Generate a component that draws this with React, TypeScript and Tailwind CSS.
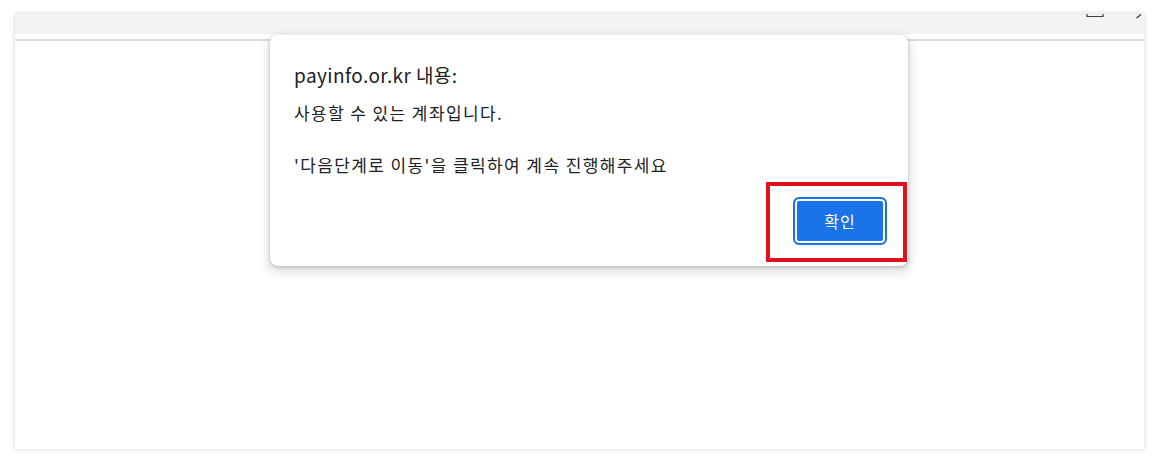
import React from 'react'

const KR = '"Noto Sans CJK KR", "Noto Sans", sans-serif'

function WindowControls() {
  return (
    <div className="flex h-full items-start justify-end gap-[32px] pr-[2px]">
      {/* bottom of the maximize square, cut off by the top edge */}
      <svg width="18" height="4" viewBox="0 0 18 4">
        <path d="M1 0 V2.5 H17 V0" fill="none" stroke="#3c4043" strokeWidth="1.2" />
      </svg>
      {/* tail of the close cross */}
      <svg width="6" height="5" viewBox="0 0 6 5">
        <path d="M0.5 4 L5 0.5" fill="none" stroke="#3c4043" strokeWidth="1.4" />
      </svg>
    </div>
  )
}

function AlertDialog() {
  return (
    <div
      role="dialog"
      aria-label="payinfo.or.kr 내용"
      className="absolute left-[255px] top-[21px] flex h-[231px] w-[638px] flex-col rounded-[8px] bg-white pt-[28px] shadow-[0_1px_3px_rgba(60,64,67,0.3),0_4px_8px_3px_rgba(60,64,67,0.15)]"
    >
      {/* Title */}
      <div
        className="pl-[24px] text-[19px] leading-[24px] tracking-[0.4px] text-[#202124]"
        style={{ fontFamily: KR }}
      >
        payinfo.or.kr 내용:
      </div>

      {/* Message */}
      <div
        className="mt-[13px] whitespace-pre-line pl-[24px] text-[17px] leading-[26px] tracking-[1.4px] text-[#202124]"
        style={{ fontFamily: KR }}
      >
        {"사용할 수 있는 계좌입니다.\n\n'다음단계로 이동'을 클릭하여 계속 진행해주세요"}
      </div>

      {/* Button row */}
      <div className="mt-[19px] flex justify-end pr-[21px]">
        <button
          className="flex h-[48px] w-[94px] items-center justify-center rounded-[6px] border-2 border-[#1a73e8] bg-[#1a73e8] text-[16px] tracking-[1px] text-white shadow-[inset_0_0_0_2px_#ffffff]"
          style={{ fontFamily: KR }}
        >
          확인
        </button>
      </div>

      {/* annotation box drawn over the button */}
      <div className="pointer-events-none absolute left-[496px] top-[147px] h-[80px] w-[141px] border-[4px] border-[#e0101e]" />
    </div>
  )
}

export default function App() {
  return (
    <div className="h-[464px] w-[1159px] overflow-hidden bg-white pl-[15px] pt-[14px]">
      <div className="relative flex h-[435px] w-[1129px] flex-col bg-white shadow-[0_0_5px_rgba(0,0,0,0.18)]">
        {/* Title bar */}
        <div className="h-[20px] bg-[#f1f3f4]">
          <WindowControls />
        </div>
        <div className="h-[5px] bg-white" />
        <div className="h-[2px] bg-[#dadce0]" />

        {/* Page content */}
        <div className="flex-1 bg-white" />

        <AlertDialog />
      </div>
    </div>
  )
}
